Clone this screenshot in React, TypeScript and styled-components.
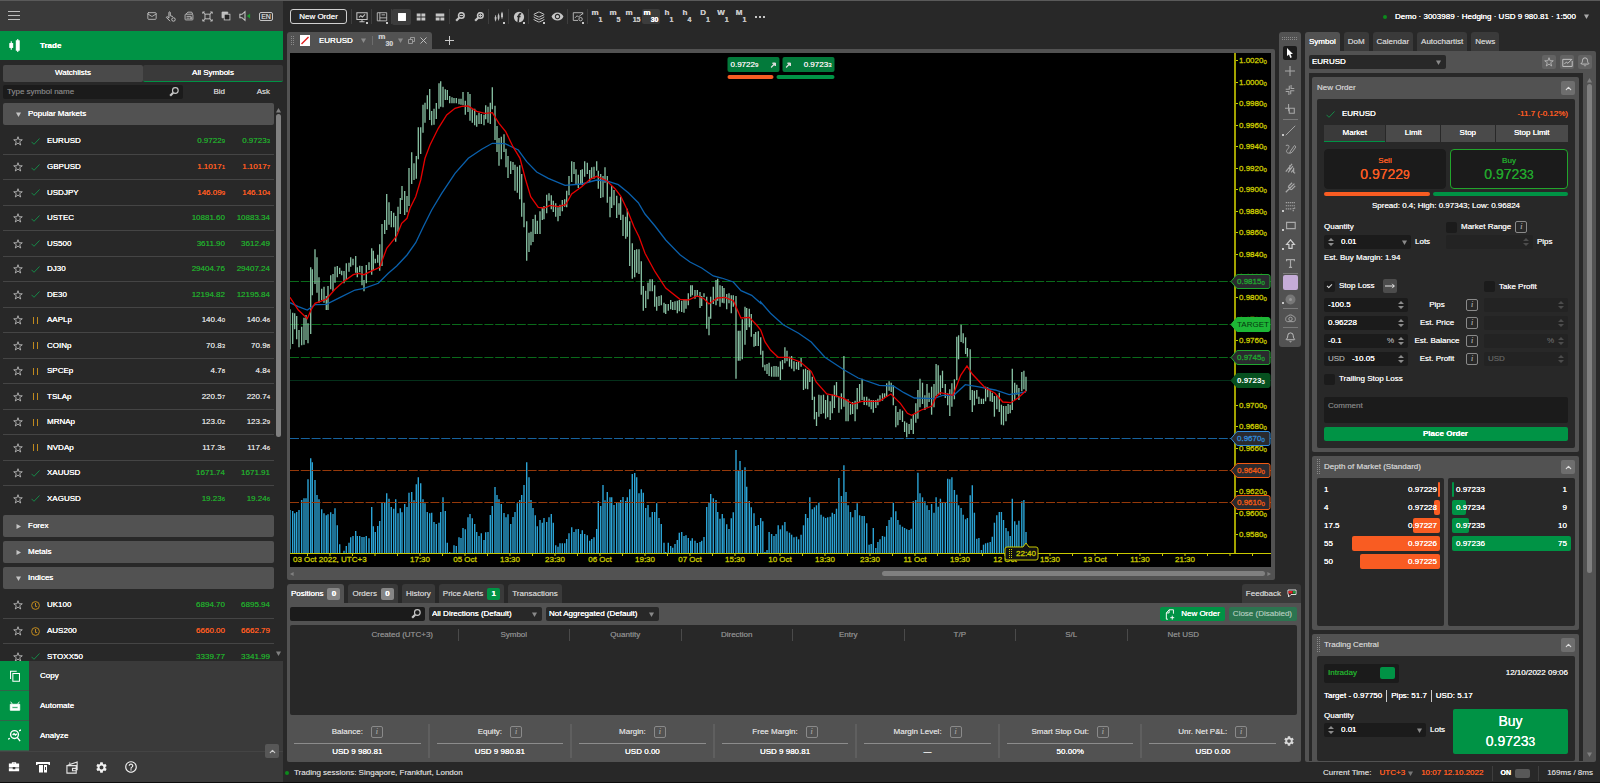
import React from "react";
import styled, { createGlobalStyle, css } from "styled-components";
import { Mail, Layers, Bell, ChevronUp } from "lucide-react";
import { MdSettings, MdHelpOutline, MdRemoveRedEye } from "react-icons/md";

const c = {
  bg: "#282828",
  panel: "#525252",
  tab: "#3a3a3a",
  field: "#1b1b1b",
  green: "#009345",
  up: "#22a52c",
  down: "#f95c22",
  text: "#ececec",
  soft: "#c6c6c6",
  dim: "#858585",
  axis: "#c9c900",
};

const Global = createGlobalStyle`
  *, *::before, *::after { box-sizing: border-box; }
  body { margin: 0; background: ${c.bg}; }
  body, button, input, select, textarea, table {
    font-family: "Liberation Sans", Arial, sans-serif;
    font-size: 8px;
    line-height: 10px;
    color: ${c.text};
    text-shadow: 0 0 0 currentColor;
  }
  button, input, select, textarea { margin: 0; padding: 0; border: 0; border-radius: 2px; background: none; outline: none; }
  button { white-space: nowrap; }
  h2, dl, dd, dt { margin: 0; font-weight: 400; }
  svg { display: block; flex: none; }
`;

/* ---------- page frame ---------- */
const Shell = styled.div`
  height: 100vh;
  display: flex;
  border-top: 1px solid #5a5a5a;
  border-bottom: 1px solid #0c0c0c;
  overflow: hidden;
  white-space: nowrap;
`;
const Side = styled.aside`
  width: 283px;
  flex: none;
  display: flex;
  flex-direction: column;
`;
const Main = styled.div`
  flex: 1;
  min-width: 0;
  display: flex;
  flex-direction: column;
`;
const TopBar = styled.header`
  height: 31px;
  flex: none;
  display: flex;
  align-items: center;
  padding: 0 11px 0 7px;
`;
const Workspace = styled.div`
  flex: 1;
  min-height: 0;
  display: flex;
  gap: 4px;
  padding: 0 4px;
`;
const Center = styled.div`
  flex: 1;
  min-width: 0;
  display: flex;
  flex-direction: column;
  gap: 4px;
`;
const ChartRow = styled.div`
  flex: 1;
  min-height: 0;
  display: flex;
  align-items: flex-start;
  gap: 4px;
`;
const StatusBar = styled.footer`
  height: 20px;
  flex: none;
  display: flex;
  align-items: center;
  padding: 2px 7px 0 2px;
  color: ${c.soft};
`;
const Spacer = styled.span`
  flex: 1;
`;
const Dot = styled.i`
  width: 4px;
  height: 4px;
  border-radius: 2px;
  background: #0c8a1c;
  margin-right: 5px;
`;

/* ---------- small parts ---------- */
const Tiny = styled.small`
  font-size: ${(p: { $s?: number }) => p.$s ?? 6}px;
`;
const Price = ({ v, s }: { v: string; s?: number }) => (
  <>
    {v.slice(0, -1)}
    <Tiny $s={s}>{v.slice(-1)}</Tiny>
  </>
);

const Caret = ({ dir = "down", fill = "#8a8a8a", size = 5 }: { dir?: string; fill?: string; size?: number }) => (
  <svg width={size} height={size} viewBox="0 0 10 10" fill={fill}>
    <path d={{ down: "M0 1h10L5 10z", up: "M0 9h10L5 0z", right: "M1 0v10l9-5z", left: "M9 0v10L0 5z" }[dir]} />
  </svg>
);
const Spin = ({ off }: { off?: boolean }) => (
  <svg width="6" height="10" viewBox="0 0 6 10" fill={off ? "#4c4c4c" : "#8c8c8c"}>
    <path d="M0 4L3 1l3 3zM0 6h6L3 9z" />
  </svg>
);
const Glass = ({ size = 10, sign = "", color = c.soft }: { size?: number; sign?: string; color?: string }) => (
  <svg width={size} height={size} viewBox="0 0 12 12" fill="none" stroke={color} strokeWidth={sign ? 1.8 : 1.4}>
    <circle cx="7.6" cy="4.2" r="3.4" />
    <path d="M5 7L1.4 10.6" strokeWidth="2.6" />
    {sign && <path d={sign === "-" ? "M5.6 4.2h4" : "M5.6 4.2h4M7.6 2.2v4"} strokeWidth="1.3" />}
  </svg>
);
const Grip = ({ cols, rows }: { cols: number; rows: number }) => (
  <svg width={cols * 2} height={rows * 2} fill="#8a8a8a">
    {Array.from({ length: cols * rows }, (_, i) => (
      <rect key={i} x={(i % cols) * 2} y={Math.floor(i / cols) * 2} width="1" height="1" />
    ))}
  </svg>
);
const Tick = () => (
  <svg width="9" height="9" viewBox="0 0 9 9" fill="none" stroke="#168a48">
    <path d="M.5 4.8L3 7.3 8.5 1.5" />
  </svg>
);

const Icon = ({ size = 12, children, fill = "none", color = c.soft, w = 1.2 }: {
  size?: number; children: React.ReactNode; fill?: string; color?: string; w?: number;
}) => (
  <svg width={size} height={size} viewBox="0 0 14 14" fill={fill} stroke={color} strokeWidth={w}>
    {children}
  </svg>
);

const InfoBox = styled.button`
  width: 12px;
  height: 12px;
  border: 1px solid #8a8a8a;
  color: #9a9a9a;
  font-family: "Liberation Serif", serif;
  font-style: italic;
`;
const Info = ({ about }: { about: string }) => <InfoBox aria-label={`About ${about}`}>i</InfoBox>;

const Field = styled.span<{ $w?: number; $off?: boolean }>`
  display: flex;
  align-items: center;
  gap: 4px;
  height: 14px;
  width: ${(p) => (p.$w ? p.$w + "px" : "auto")};
  padding: 0 4px;
  border-radius: 2px;
  background: ${(p) => (p.$off ? "#232323" : c.field)};
  color: ${(p) => (p.$off ? "#5c5c5c" : "#9a9a9a")};
  > svg:first-child, > span:first-child { margin-right: 3px; }
  input {
    flex: 1;
    min-width: 0;
    width: 0;
    color: #fff;
  }
  input::placeholder { color: #777; }
`;
const SelectWrap = styled.span<{ $w: number }>`
  display: flex;
  align-items: center;
  width: ${(p) => p.$w}px;
  height: 14px;
  padding: 0 5px 0 3px;
  border-radius: 2px;
  background: ${c.bg};
  select {
    appearance: none;
    flex: 1;
    color: #fff;
  }
`;
const Select = ({ label, w, value }: { label: string; w: number; value: string }) => (
  <SelectWrap $w={w}>
    <select aria-label={label}>
      <option>{value}</option>
    </select>
    <Caret />
  </SelectWrap>
);
const Check = styled.input.attrs({ type: "checkbox" })`
  appearance: none;
  width: 11px;
  height: 11px;
  flex: none;
  background: ${c.field};
  display: grid;
  place-items: center;
  &:checked::after {
    content: "";
    width: 5px;
    height: 3px;
    border: solid #ddd;
    border-width: 0 0 1px 1px;
    transform: translateY(-1px) rotate(-45deg);
  }
`;
const CheckLabel = styled.label`
  display: flex;
  align-items: center;
  gap: 4px;
`;

/* ---------- left panel ---------- */
const SideHead = styled.div`
  height: 30px;
  flex: none;
  display: flex;
  align-items: center;
  gap: 8px;
  padding: 0 10px 0 8px;
  background: ${c.tab};
  color: ${c.soft};
`;
const HeadTools = styled.div`
  display: flex;
  align-items: center;
  gap: 8px;
  margin-left: auto;
`;
const LangBadge = styled.button`
  width: 14px;
  height: 9px;
  border: 1px solid ${c.soft};
  color: ${c.soft};
  font-size: 7px;
  line-height: 7px;
`;
const BareButton = styled.button`
  display: grid;
  place-items: center;
`;
const TradeBar = styled.button`
  height: 29px;
  flex: none;
  display: flex;
  align-items: center;
  gap: 19px;
  padding-left: 8px;
  border-radius: 0;
  background: ${c.green};
  color: #fff;
  font-weight: 700;
`;
const SideTabs = styled.div`
  display: grid;
  grid-template-columns: 1fr 1fr;
  margin: 5px 0 3px 3px;
  flex: none;
`;
const SideTab = styled.button<{ $on?: boolean }>`
  height: 17px;
  border-radius: 2px;
  background: ${(p) => (p.$on ? c.tab : "#4a4a4a")};
  border-bottom: 1px solid ${(p) => (p.$on ? c.green : "#4a4a4a")};
  color: #fff;
`;
const SideSearch = styled.div`
  display: flex;
  align-items: center;
  flex: none;
  height: 14px;
  margin: 0 13px 4px 3px;
  color: ${c.soft};
  b { font-weight: 400; width: 42px; text-align: right; }
  b + b { width: 45px; }
`;
const ScrollRow = styled.div`
  flex: 1;
  min-height: 0;
  display: flex;
  overflow: hidden;
`;
const SymbolList = styled.div`
  flex: 1;
  margin-left: 3px;
  min-width: 0;
`;
const Group = styled.section`
  margin-bottom: 4px;
`;
const GroupHead = styled.button`
  display: flex;
  align-items: center;
  gap: 7px;
  width: 100%;
  height: 22px;
  padding-left: 13px;
  background: ${c.panel};
  color: #fff;
`;
const Quotes = styled.table`
  width: 100%;
  margin-top: 3px;
  border-collapse: collapse;
  table-layout: fixed;
  td { padding: 1px 0 0; }
  tr { height: 26px; border-bottom: 1px solid #454545; }
  tr:nth-child(even) { height: 25px; }
  tr:last-child { border-bottom: 0; }
  td:nth-child(1) { width: 28px; padding-left: 10px; }
  td:nth-child(2) { width: 16px; }
  td:nth-child(3) { color: #fff; }
  td:nth-child(4) { width: 55px; text-align: right; }
  td:nth-child(5) { width: 49px; text-align: right; padding-right: 4px; }
`;
const QuoteCell = styled.td<{ $tone: string }>`
  color: ${(p) => ({ up: c.up, down: c.down, flat: "#d8d8d8" }[p.$tone])};
`;
const Track = styled.div<{ $w: number }>`
  width: ${(p) => p.$w}px;
  flex: none;
  display: flex;
  flex-direction: column;
  align-items: center;
  justify-content: space-between;
  padding: 5px 0;
`;
const Thumb = styled.i<{ $pct: number }>`
  width: 5px;
  height: ${(p) => p.$pct}%;
  margin-top: 1px;
  margin-bottom: auto;
  border-radius: 3px;
  background: #808080;
`;
const AppNav = styled.nav`
  flex: none;
  background: ${c.tab};
`;
const AppItem = styled.button`
  display: flex;
  align-items: center;
  gap: 11px;
  width: 100%;
  height: 30px;
  color: #fff;
  span {
    width: 29px;
    height: 30px;
    display: grid;
    place-items: center;
    background: ${c.green};
    border-bottom: 1px solid #33634a;
  }
`;
const SideFoot = styled.div`
  position: relative;
  height: 31px;
  display: flex;
  align-items: center;
  gap: 16px;
  padding-left: 8px;
  border-top: 1px solid #444;
`;
const Collapse = styled.button`
  width: 14px;
  height: 14px;
  display: grid;
  place-items: center;
  background: #6e6e6e;
`;
const FootCollapse = styled(Collapse)`
  position: absolute;
  right: 4px;
  top: -8px;
  background: #575757;
`;

type Row = [string, string, string, string, string];
const popular: Row[] = [
  ["EURUSD", "0.97229", "0.97233", "up", "open"],
  ["GBPUSD", "1.10171", "1.10177", "down", "open"],
  ["USDJPY", "146.099", "146.104", "down", "open"],
  ["USTEC", "10881.60", "10883.34", "up", "open"],
  ["US500", "3611.90", "3612.49", "up", "open"],
  ["DJ30", "29404.76", "29407.24", "up", "open"],
  ["DE30", "12194.82", "12195.84", "up", "open"],
  ["AAPLp", "140.40", "140.46", "flat", "paused"],
  ["COINp", "70.83", "70.98", "flat", "paused"],
  ["SPCEp", "4.78", "4.84", "flat", "paused"],
  ["TSLAp", "220.57", "220.74", "flat", "paused"],
  ["MRNAp", "123.02", "123.29", "flat", "paused"],
  ["NVDAp", "117.35", "117.46", "flat", "paused"],
  ["XAUUSD", "1671.74", "1671.91", "up", "open"],
  ["XAGUSD", "19.236", "19.246", "up", "open"],
];
const indices: Row[] = [
  ["UK100", "6894.70", "6895.94", "up", "clock"],
  ["AUS200", "6660.00", "6662.79", "down", "clock"],
  ["STOXX50", "3339.77", "3341.99", "up", "open"],
];
const plainQuote = new Set(["USTEC", "US500", "DJ30", "DE30", "XAUUSD", "UK100", "AUS200", "STOXX50"]);

const State = ({ kind }: { kind: string }) =>
  kind === "open" ? (
    <Tick />
  ) : kind === "paused" ? (
    <svg width="9" height="9" fill="#c08a1e">
      <rect x="2" y="1" width="1" height="7" />
      <rect x="6" y="1" width="1" height="7" />
    </svg>
  ) : (
    <svg width="9" height="9" viewBox="0 0 9 9" fill="none" stroke="#c08a1e">
      <circle cx="4.5" cy="4.5" r="3.9" />
      <path d="M4.5 2v3.4h1.6" />
    </svg>
  );

const FavStar = () => (
  <svg width="10" height="10" viewBox="0 0 14 14" fill="none" stroke="#b4b4b4" strokeWidth="1.3">
    <path d="M7 1l1.5 4.3H13L9.4 8l1.4 4.6L7 9.9l-3.800 2.700L4.600 8 1 5.300h4.500z" />
  </svg>
);

const QuoteTable = ({ rows }: { rows: Row[] }) => (
  <Quotes>
    <tbody>
      {rows.map(([name, bid, ask, tone, state]) => (
        <tr key={name}>
          <td>
            <BareButton aria-label={`Favourite ${name}`}>
              <FavStar />
            </BareButton>
          </td>
          <td><State kind={state} /></td>
          <td>{name}</td>
          <QuoteCell $tone={tone}>{plainQuote.has(name) ? bid : <Price v={bid} />}</QuoteCell>
          <QuoteCell $tone={tone}>{plainQuote.has(name) ? ask : <Price v={ask} />}</QuoteCell>
        </tr>
      ))}
    </tbody>
  </Quotes>
);

const LeftPanel = () => (
  <Side>
    <SideHead>
      <BareButton aria-label="Menu">
        <svg width="12" height="10" fill="#bdbdbd">
          <rect width="12" height="1" /><rect y="4" width="12" height="1" /><rect y="8" width="12" height="1" />
        </svg>
      </BareButton>
      <HeadTools>
        <Mail size={10} strokeWidth={2} />
        <Icon size={11}>
          <path d="M6.5 13L2 8.5c-.6-1 .6-1.6 1.4-.9L5 9V2c0-1.3 1.7-1.3 1.7 0v4l3.3 1" />
          <circle cx="10.8" cy="10.8" r="2.2" />
        </Icon>
        <Icon size={10}>
          <rect x="1.5" y="4.5" width="11" height="8" rx="1" />
          <path d="M3.5 7.5h7M3.5 10h4.5M3 4.2L5.4 1.6h5.4L12 4.2M9.2 9.2h1.6v1.6H9.2z" />
        </Icon>
        <Icon size={11}>
          <rect x="3.8" y="4" width="6.4" height="6" />
          <path d="M1 3.5V1.3h2.6M10.4 1.3H13v2.2M13 10.5v2.2h-2.6M3.6 12.7H1v-2.2M1 1.3l2.8 2.7M13 1.3L10.2 4M1 12.7L3.8 10M13 12.7L10.2 10" />
        </Icon>
        <Icon size={10}>
          <path d="M9.5 1.5h-8v8h2V3.5h6z" fill={c.soft} />
          <rect x="4.5" y="4.5" width="8" height="8" fill="#222" />
        </Icon>
        <Icon size={12}>
          <path d="M1 5v4h2.5L7 12V2L3.5 5z" />
          <path d="M13 4v6L9 7z" fill="#1c9a2e" stroke="none" />
        </Icon>
        <LangBadge aria-label="Language">EN</LangBadge>
      </HeadTools>
    </SideHead>
    <TradeBar>
      <Icon size={13} fill="#fff" color="#fff">
        <path d="M3.5 2.5v9M10.5 0v14" />
        <rect x="2" y="5" width="3" height="4" /><rect x="9" y="2" width="3" height="10" />
      </Icon>
      Trade
    </TradeBar>
    <SideTabs>
      <SideTab>Watchlists</SideTab>
      <SideTab $on>All Symbols</SideTab>
    </SideTabs>
    <SideSearch>
      <Field $w={180}>
        <input aria-label="Symbol name" placeholder="Type symbol name" />
        <Glass />
      </Field>
      <b>Bid</b>
      <b>Ask</b>
    </SideSearch>
    <ScrollRow>
      <SymbolList>
        <Group>
          <GroupHead><Caret fill="#c4c4c4" />Popular Markets</GroupHead>
          <QuoteTable rows={popular} />
        </Group>
        <Group><GroupHead><Caret dir="right" fill="#c4c4c4" />Forex</GroupHead></Group>
        <Group><GroupHead><Caret dir="right" fill="#c4c4c4" />Metals</GroupHead></Group>
        <Group>
          <GroupHead><Caret fill="#c4c4c4" />Indices</GroupHead>
          <QuoteTable rows={indices} />
        </Group>
      </SymbolList>
      <Track $w={9}>
        <Caret dir="up" fill="#808080" />
        <Thumb $pct={59} />
        <Caret fill="#808080" />
      </Track>
    </ScrollRow>
    <AppNav>
      <AppItem>
        <span>
          <Icon color="#fff" size={12}><path d="M9 1.5H1.8v9M4.5 4h7.7v9H4.5z" /></Icon>
        </span>
        Copy
      </AppItem>
      <AppItem>
        <span>
          <Icon color="#fff" fill="#fff" size={12} w={1}>
            <path d="M2 2l2 3M12 2l-2 3" />
            <path d="M1.5 5h11v7h-11zM3.5 8v2h7V8z" fillRule="evenodd" />
          </Icon>
        </span>
        Automate
      </AppItem>
      <AppItem>
        <span>
          <Icon color="#fff" size={13} w={1.5}>
            <circle cx="7" cy="6" r="4.2" /><path d="M10 9l3 4M0 11l2-1M5 6.5L6.5 5 8 6.5l1.5-1.5M12 2l2-1" />
          </Icon>
        </span>
        Analyze
      </AppItem>
      <SideFoot>
        <BareButton aria-label="Accounts">
          <Icon fill="#fff" color="#fff" w={0}>
            <path d="M4.5 3V1.5h5V3H13v4.5H8.5V7h-3v.5H1V3zM6 3h2v-.5H6zM1 8.5h4.5v1h3v-1H13V12H1z" />
          </Icon>
        </BareButton>
        <BareButton aria-label="Deposit">
          <Icon size={14} fill="#fff" color="#fff" w={0}>
            <path d="M0 2h14v3h-1.5V4h-11v1H0zM3 5h4v7.5H3zM8 5h3v7.5H8zM9 7v3h1V7z" fillRule="evenodd" />
          </Icon>
        </BareButton>
        <BareButton aria-label="Wallet">
          <Icon size={13} color="#e6e6e6">
            <path d="M1 5h10v8H1zM7 8h4v2.5H7zM2 4.5l10-3.5v9M4 3V1.5" />
          </Icon>
        </BareButton>
        <BareButton aria-label="Settings"><MdSettings size={13} color="#f2f2f2" /></BareButton>
        <BareButton aria-label="Help"><MdHelpOutline size={14} color="#f2f2f2" /></BareButton>
        <FootCollapse aria-label="Collapse"><ChevronUp size={9} color="#ccc" strokeWidth={3} /></FootCollapse>
      </SideFoot>
    </AppNav>
  </Side>
);

/* ---------- top toolbar ---------- */
const OrderButton = styled.button`
  width: 57px;
  height: 15px;
  margin-right: 4px;
  border: 1px solid #d0d0d0;
  border-radius: 3px;
`;
const Tool = styled.button<{ $on?: boolean; $more?: boolean }>`
  position: relative;
  width: 19px;
  height: 16px;
  display: grid;
  place-items: center;
  background: ${(p) => (p.$on ? "#3c3c3c" : "none")};
  ${(p) =>
    p.$more &&
    css`
      &::after {
        content: "";
        position: absolute;
        right: 3px;
        bottom: 1px;
        width: 2px;
        height: 2px;
        background: #c8c8c8;
      }
    `}
`;
const ToolSep = styled.i`
  width: 1px;
  height: 15px;
  background: #3e3e3e;
`;
const Frame = styled.button<{ $on?: boolean }>`
  width: 18px;
  height: 15px;
  display: flex;
  justify-content: center;
  align-items: flex-start;
  background: ${(p) => (p.$on ? "#3c3c3c" : "none")};
  color: ${(p) => (p.$on ? "#fff" : c.soft)};
  font-weight: 700;
  line-height: 8px;
  sub {
    font-size: 7px;
    line-height: 8px;
    vertical-align: baseline;
    margin-top: 7px;
  }
`;
const TabFrame = styled(Frame)`
  width: 14px;
`;
const Account = styled.button`
  display: flex;
  align-items: center;
  gap: 8px;
  color: #fff;
  ${Dot} { margin: 0; }
`;
const frames = ["m1", "m5", "m15", "m30", "h1", "h4", "D1", "W1", "M1"];

const Toolbar = () => (
  <TopBar>
    <OrderButton>New Order</OrderButton>
    <ToolSep />
    <Tool $more aria-label="Chart display">
      <Icon><path d="M1 2h12v8H1zM7 10v2.5M4 12.5h6M3.5 7.5l2-2 2 1.5 3-3" /></Icon>
    </Tool>
    <ToolSep />
    <Tool $more aria-label="Panels"><Icon w={1}><path d="M1.5 2h11v9.5h-11zM4.5 2v9.5M4.5 8h8M6.5 4.5h4" /></Icon></Tool>
    <ToolSep />
    <Tool $on aria-label="Single chart"><Icon fill="#fff" color="#fff"><rect x="3" y="3" width="8" height="8" /></Icon></Tool>
    <Tool aria-label="Multi chart">
      <Icon fill={c.soft} w={0}><path d="M2 3h4.5v3.5H2zM7.5 3H12v3.5H7.5zM2 7.5h4.5V11H2zM7.5 7.5H12V11H7.5z" /></Icon>
    </Tool>
    <Tool aria-label="Free chart layout">
      <Icon fill={c.soft} w={0}><path d="M2 3h10v3.5H2zM2 7.5h4.5V11H2zM7.5 7.5H12V11H7.5z" /></Icon>
    </Tool>
    <ToolSep />
    <Tool aria-label="Zoom out"><Glass sign="-" /></Tool>
    <Tool aria-label="Zoom in"><Glass sign="+" /></Tool>
    <ToolSep />
    <Tool $more aria-label="Chart type">
      <Icon fill={c.soft} w={1}><path d="M3 5v7M6.5 3v8M10.5 1v8M2.5 7h1v3h-1zM6 5h1v4H6zM10 3h1v4h-1z" /></Icon>
    </Tool>
    <ToolSep />
    <Tool $more aria-label="Indicators">
      <Icon fill={c.soft} w={0}><circle cx="7" cy="7" r="6" /><path d="M9.5 3.5c-2-.5-2.5.5-2.7 2L6 13M4.8 6.5h4" fill="none" stroke={c.bg} strokeWidth="1.8" /></Icon>
    </Tool>
    <ToolSep />
    <Tool $more aria-label="Layers"><Layers size={12} color={c.soft} /></Tool>
    <Tool aria-label="Visibility"><MdRemoveRedEye size={13} color={c.soft} /></Tool>
    <ToolSep />
    <Tool $more aria-label="Drawings"><Icon w={1}><path d="M7 11H1.5V2h11v2M3.5 8l2.5-2.5 1.5 1.5L13 2.5" /><circle cx="10" cy="9.5" r="2" /></Icon></Tool>
    <ToolSep />
    {frames.map((f) => (
      <Frame key={f} $on={f === "m30"}>
        {f[0]}
        <sub>{f.slice(1)}</sub>
      </Frame>
    ))}
    <Tool aria-label="More time frames">
      <svg width="10" height="2" fill={c.soft}><rect width="2" height="2" /><rect x="4" width="2" height="2" /><rect x="8" width="2" height="2" /></svg>
    </Tool>
    <Spacer />
    <Account>
      <Dot />
      Demo · 3003989 · Hedging · USD 9 980.81 · 1:500
      <Caret fill="#aaa" />
    </Account>
  </TopBar>
);

/* ---------- chart ---------- */
/* Each bar: x, high, low, top of its volume column. */
const barsEarly =
  "15 778 898 240,23 788 882 243,29 790 838 250,35 798 868 246,42 840 892 240,50 830 886 210,57 803 884 205,63 795 870 205,69 820 880 148,77 652 852 85,82 658 736 97,90 598 702 150,96 622 728 195,102 682 758 208,110 716 750 238,117 710 758 250,124 738 780 256,129 708 780 253,137 676 718 247,144 672 724 252,150 650 698 235,157 648 682 286,164 653 672 343,170 662 676 369,177 663 700 362,184 640 690 348,192 638 665 338,197 622 650 322,204 626 646 318,212 618 668 303,217 652 682 318,224 647 667 318,231 648 706 321,237 690 724 321,244 645 700 318,252 637 660 325,260 595 674 231,265 602 660 289,271 626 640 306,278 614 638 288,284 583 662 273,291 522 648 217,299 510 552 217,305 432 540 190,312 457 524 206,319 483 532 231,326 488 532 236,332 498 575 208,339 470 545 250,346 444 492 235,351 408 450 247,359 423 495 222,366 438 487 231,372 354 468 188,380 307 402 186,387 340 390 211,394 318 386 163,400 232 328 142,407 232 312 160,414 164 248 208,420 158 218 220,427 136 178 246,434 117 210 250,440 183 226 248,447 176 224 276,454 159 207 282,462 100 176 278,467 94 170 246,474 110 172 202,481 118 150 243,487 120 150 338,494 138 160 366,501 142 160 368,507 144 160 346,514 144 160 348,522 146 163 322,528 146 164 324,534 126 166 294,541 152 194 298,549 126 186 262,555 132 212 252,562 178 218 265,569 176 226 282,575 196 230 306,582 188 222 318,589 192 222 310,597 194 226 330,602 166 208 307,609 170 218 306,616 158 222 255,622 112 178 228,630 167 270 171,636 228 306 195,642 264 347 208,649 260 328 222,657 253 306 249,663 296 352 262,669 318 384 253,677 334 372 282,684 336 360 261,690 344 422 246,697 350 428 220,704 346 448 210,710 372 500 195,717 458 532 165,725 514 632 97,732 548 606 142,738 545 586 210,744 507 576 234,751 494 552 256,757 512 552 289,765 484 552 270,772 474 510 278,777 468 508 264,785 434 490 276,792 430 452 262,799 436 478 252,805 452 486 278,812 460 500 346,819 472 514 350,825 464 498 340,832 450 484 340,839 448 470 340,845 422 472 327,852 378 436 310,860 334 396 292,867 336 372 306,873 358 402 298,880 374 414 297,887 360 404 312,892 358 406 301,899 334 380 312,907 338 372 316,914 360 396 332,920 352 386 327,927 350 386 322,935 334 362 297,940 362 416 213,947 372 444 228,954 378 442 165,960 352 398 211,967 378 458 186,975 440 502 202,980 408 474 202,987 420 466 225,995 437 504 218,1002 460 494 218,1007 440 510 210,1014 494 558 201,1022 500 566 213,1027 476 560 202,1034 514 648 178,1042 580 686 132,1049 600 682 129,1055 598 668 142,1062 598 672 190,1069 634 734 178,1075 708 782 188,1082 722 774 234,1089 698 748 225,1095 688 724 262,1102 688 724 246,1109 706 770 246,1115 740 782 220,1122 738 768 264,1129 736 766 282,1137 758 788 338,1142 762 792 366,1150 762 782 338,1157 750 778 348,1163 756 780 353,1170 754 780 342,1177 752 790 330,1183 750 784 308,1190 752 786 306,1197 750 788 318,1203 748 776 316,1210 730 766 324,1217 706 740 332,1222 706 736 325,1230 720 746 332,1237 720 740 339,1245 726 774 336,1250 738 768 332,1257 730 742 321,1265 740 836 231,1272 800 856 218,1277 740 806 192,1285 710 762 205,1293 690 766 210,1298 686 752 246,1305 706 770 266,1312 708 758 252,1317 714 760 265,1325 732 778 283,1332 730 760 297,1339 736 790 265,1345 736 770 247,1353 738 986 60,1360 842 932 121,1365 842 932 93,1372 808 928 120,1380 770 884 112,1385 774 840 170,1393 776 832 213,1399 792 860 232,1407 852 890 250,1412 846 888 288,1420 844 888 285,1427 862 914 264";
const barsLate =
  "8 452 502 964,14 494 512 1056,20 492 522 1050,26 488 528 996,33 500 530 1002,40 498 530 1008,46 498 530 1002,52 500 530 976,58 484 540 988,64 480 508 976,71 442 490 966,77 452 484 994,84 470 500 998,90 468 506 1004,97 484 514 1012,104 486 508 1010,110 484 510 1018,117 474 500 1004,124 508 570 976,130 506 566 942,136 510 568 954,142 510 546 892,149 530 600 928,155 590 658 922,161 636 678 916,168 584 650 908,174 586 642 944,181 584 640 950,187 600 656 954,193 586 652 952,200 604 660 950,206 584 640 938,212 556 624 942,218 546 592 926,225 590 638 834,232 580 628 888,239 468 620 796,245 600 664 876,251 598 664 916,258 612 644 936,264 606 642 952,271 602 664 930,277 564 628 910,284 552 606 946,291 536 600 948,297 590 615 948,304 590 616 970,311 596 620 1034,317 600 628 1032,323 600 638 984,330 600 624 1044,336 596 616 1026,342 586 604 1018,349 580 602 1008,355 580 594 1010,361 550 590 978,368 544 572 960,374 548 576 952,380 556 616 908,387 618 682 934,393 636 676 960,399 628 660 974,406 632 666 980,412 664 696 984,418 668 712 988,425 672 702 990,431 656 690 986,437 642 702 904,444 610 668 900,450 570 656 818,456 536 622 880,463 548 612 892,470 586 630 904,476 552 622 916,482 578 606 930,489 560 644 912,496 552 622 938,502 492 588 892,508 496 582 920,514 526 584 896,520 512 564 906,528 552 594 906,535 580 616 836,541 568 648 838,547 550 620 832,554 538 598 870,561 410 540 884,566 406 478 916,573 374 426 924,579 400 430 944,586 412 462 958,591 444 470 954,599 448 600 886,605 570 636 856,611 572 616 938,618 570 596 1016,624 590 612 1014,631 596 612 1050,637 596 612 1034,643 560 604 1030,649 562 592 1028,656 568 604 1026,662 578 606 1010,668 588 650 968,675 586 628 946,682 578 636 936,688 614 674 936,694 618 676 960,701 618 664 984,707 612 642 994,713 614 640 1008,719 506 630 896,726 548 600 964,732 554 584 974,738 564 600 962,746 516 574 904,752 512 568 900,758 530 574 996";

const parse = (s: string) => s.split(",").map((t) => t.split(" ").map(Number));
const earlyX = (x: number) => x / 3 - 5;
const lateX = (x: number) => x / 2.85 + 470;
const bars = [
  ...parse(barsEarly).map(([x, h, l, v]) => [earlyX(x), h / 3 - 3, l / 3 - 3, v / 3 + 377]),
  ...parse(barsLate).map(([x, h, l, v]) => [lateX(x), h / 3 + 147, l / 3 + 147, v / 3 + 147]),
];
const curve = (early: string, late: string) =>
  [
    ...parse(early).map(([x, y]) => [earlyX(x), y / 3 - 3]),
    ...parse(late).map(([x, y]) => [lateX(x), y / 3 + 147]),
  ]
    .map((p) => p.map((n) => n.toFixed(1)).join(","))
    .join(" ");
const fastAverage = curve(
  "15 742,40 780,67 806,78 780,90 760,124 748,150 718,175 695,205 674,220 670,237 674,262 662,284 652,305 595,335 558,350 520,366 505,375 475,392 440,407 390,420 325,435 285,460 235,485 195,510 175,530 169,549 168,575 184,600 190,622 188,642 220,662 245,684 290,705 325,722 390,737 440,760 472,777 474,795 466,820 470,842 464,860 432,890 410,915 388,935 379,965 392,990 416,1007 438,1027 480,1047 530,1062 560,1080 610,1110 665,1142 714,1185 748,1210 750,1237 738,1257 746,1272 762,1297 744,1320 742,1345 752,1368 804,1393 802,1415 825",
  "2 390,14 425,30 450,52 472,80 472,115 486,146 514,160 546,190 582,212 586,240 596,265 612,290 604,340 604,360 590,373 582,400 610,420 640,432 646,460 630,490 618,502 590,514 578,550 586,572 526,590 498,605 522,640 562,670 580,692 606,715 608,735 594,758 572"
);
const slowAverage = curve(
  "15 758,40 770,67 780,90 764,124 763,170 740,210 720,237 715,280 700,310 670,335 648,366 615,392 578,415 530,440 480,470 430,510 370,550 325,590 298,622 280,660 281,700 300,725 335,755 366,790 385,840 406,890 402,935 390,965 393,1000 404,1030 428,1060 458,1080 492,1110 528,1142 570,1185 614,1215 636,1250 654,1285 678,1310 684,1345 696,1368 722,1400 736,1427 760",
  "2 306,30 340,66 374,110 400,146 426,185 472,240 510,280 534,340 556,380 558,410 578,440 594,495 596,520 586,552 586,585 554,620 560,670 570,710 584,758 576"
);

const times = ["17:30", "05 Oct", "13:30", "23:30", "06 Oct", "19:30", "07 Oct", "15:30", "10 Oct", "13:30", "23:30", "11 Oct", "19:30", "12 Oct", "15:30", "13 Oct", "11:30", "21:30"];
const levels: { y: number; text: string; line: string; edge: string; solid?: string }[] = [
  { y: 228, text: "0.98150", line: "#0a6a1a", edge: "#1fa52f" },
  { y: 271, text: "TARGET", line: "#0a6a1a", edge: "#1db636", solid: "#1db636" },
  { y: 304, text: "0.97450", line: "#0a6a1a", edge: "#1fa52f" },
  { y: 327, text: "0.97233", line: "#04301a", edge: "#06501f", solid: "#06501f" },
  { y: 385, text: "0.96700", line: "#17639f", edge: "#2f8bdc" },
  { y: 417, text: "0.96400", line: "#96390a", edge: "#f25a12" },
  { y: 449, text: "0.96100", line: "#96390a", edge: "#f25a12" },
];
/* Scale labels that a level tag covers are left out. */
const covered = new Set([14, 15, 19]);

const Plot = styled.svg`
  flex: 1;
  width: 100%;
  min-height: 0;
  background: #000;
  font-size: 8px;
  text-shadow: none;
`;
const TailDigit = styled.tspan`
  font-size: 6px;
`;
const AxisPrice = ({ v }: { v: string }) => (
  <>
    {v.slice(0, -1)}
    <TailDigit dy="1">{v.slice(-1)}</TailDigit>
  </>
);

const ChartPlot = () => (
  <Plot role="img" aria-label="EURUSD chart">
    <g stroke="#2ba3d4" strokeWidth="1.4">
      {bars.map(([x, , , v], i) => <path key={i} d={`M${x.toFixed(1)} ${v.toFixed(1)}V500`} />)}
    </g>
    {levels.map((l) => (
      <line key={l.y} x1="0" x2="100%" y1={l.y + 0.5} y2={l.y + 0.5} stroke={l.line} strokeDasharray={l.text === "0.97233" ? "none" : "9 1.8"} />
    ))}
    <g stroke="#8ac4a6" strokeWidth="1.3">
      {bars.map(([x, h, lo], i) => <path key={i} d={`M${x.toFixed(1)} ${h.toFixed(1)}V${lo.toFixed(1)}`} />)}
    </g>
    <polyline points={slowAverage} fill="none" stroke="#0a60ac" strokeWidth="1.3" />
    <polyline points={fastAverage} fill="none" stroke="#e60000" strokeWidth="1.3" />
    <line x1="0" x2="100%" y1="500.5" y2="500.5" stroke={c.axis} />
    <g fill={c.axis} textAnchor="middle">
      {Array.from({ length: 43 }, (_, i) => (
        <rect key={i} x={17 + i * 22.5} y="501" width="1" height="2" />
      ))}
      <g stroke={c.axis} strokeWidth="0.3">
        <text x="3" y="509" textAnchor="start">03 Oct 2022, UTC+3</text>
        {times.map((t, i) => <text key={i} x={130 + i * 45} y="509">{t}</text>)}
      </g>
    </g>
    <path d="M717 494h16l3-4 3 4h7q2 0 2 2v9q0 2-2 2h-29q-2 0-2-2v-9q0-2 2-2z" fill="#111" stroke={c.axis} />
    <g fill={c.axis}>
      {[0, 1, 2, 3, 4].flatMap((r) => [0, 2].map((k) => <rect key={`${r}${k}`} x={719 + k} y={496 + r * 2} width="1" height="1" />))}
      <text x="726" y="503" stroke={c.axis} strokeWidth="0.3">22:40</text>
    </g>
    <svg x="100%" overflow="visible">
      <rect x="-37" y="0" width="2" height="500" fill="#a3a300" />
      <g fill={c.axis}>
        {Array.from({ length: 23 }, (_, i) => {
          const y = Math.round(7 + i * 21.55);
          return covered.has(i) ? null : (
            <g key={i}>
              <rect x="-35" y={y} width="2" height="1" />
              <text x="-32" y={y + 3} stroke={c.axis} strokeWidth="0.3"><AxisPrice v={((10020 - i * 20) / 10000).toFixed(4) + "0"} /></text>
            </g>
          );
        })}
      </g>
      {levels.map((l) => {
        const ink = l.text === "TARGET" ? "#06380f" : l.solid ? "#fff" : l.edge;
        return (
          <g key={l.y}>
            <path d={`M-40 ${l.y + 0.5}l5-6q1-1 2-1h30q2 0 2 2v10q0 2-2 2h-30q-1 0-2-1z`} fill={l.solid ?? "#2a2a2e"} stroke={l.edge} />
            <text x="-34" y={l.y + 3} fill={ink} stroke={l.solid ? "none" : ink} strokeWidth="0.3" fontWeight={l.text === "0.97233" ? 700 : 400}>
              {l.text === "TARGET" ? l.text : <AxisPrice v={l.text} />}
            </text>
          </g>
        );
      })}
    </svg>
  </Plot>
);

const ChartColumn = styled.div`
  flex: 1;
  min-width: 0;
  align-self: stretch;
  display: flex;
  flex-direction: column;
`;
const TabRow = styled.div`
  display: flex;
  align-items: center;
  flex: none;
`;
const ChartTab = styled.div`
  display: flex;
  align-items: center;
  height: 17px;
  gap: 5px;
  padding: 0 5px 0 4px;
  border-radius: 3px 3px 0 0;
  background: ${c.panel};
  strong { font-weight: 400; color: #fff; margin: 0 3px 0 4px; }
  ${ToolSep} { height: 9px; margin: 0 1px; background: #6c6c6c; }
`;
const AddTab = styled.button`
  margin-left: 13px;
`;
const ChartFrame = styled.div`
  position: relative;
  flex: 1;
  min-height: 0;
  display: flex;
  flex-direction: column;
  padding: 4px 4px 0 3px;
  border-radius: 0 2px 2px 2px;
  background: ${c.panel};
`;
const HScroll = styled.div`
  height: 13px;
  flex: none;
  display: flex;
  align-items: center;
  justify-content: space-between;
  i {
    width: 39%;
    height: 5px;
    margin: 0 2px 0 auto;
    border-radius: 3px;
    background: #808080;
  }
`;
const QuickTrade = styled.div`
  position: absolute;
  left: 50%;
  top: 8px;
  transform: translateX(-50%);
  display: grid;
  grid-template-columns: 52px 52px;
  gap: 3px;
`;
const QuickButton = styled.button`
  height: 15px;
  display: flex;
  align-items: center;
  justify-content: space-between;
  padding: 0 3px;
  background: #037a3b;
`;
const Sentiment = styled.div<{ $cols: string; $gap: number }>`
  grid-column: 1 / -1;
  display: grid;
  grid-template-columns: ${(p) => p.$cols};
  gap: ${(p) => p.$gap}px;
  i { height: 4px; border-radius: 2px; background: ${c.down}; }
  i + i { background: ${c.green}; }
`;
const ArrowNE = () => (
  <svg width="6" height="6" viewBox="0 0 6 6" fill="#ddd" stroke="#ddd" strokeWidth="1.2">
    <path d="M.5 5.5L4 2" /><path d="M2 1h3v3z" strokeWidth="1" />
  </svg>
);

const Chart = () => (
  <ChartColumn>
    <TabRow>
      <ChartTab>
        <Grip cols={2} rows={5} />
        <svg width="10" height="11"><rect width="10" height="11" fill="#fff" /><path d="M1.5 9L8.5 2" stroke="#e02020" strokeWidth="1.5" /></svg>
        <strong>EURUSD</strong>
        <Caret />
        <ToolSep />
        <TabFrame as="span">m<sub>30</sub></TabFrame>
        <Caret />
        <Icon size={7} color="#a0a0a0" w={1.8}><path d="M1 5h8v8H1zM5 5V1h8v8H9" /></Icon>
        <BareButton aria-label="Close tab"><Icon size={7} w={1.8}><path d="M1 1l12 12M13 1L1 13" /></Icon></BareButton>
      </ChartTab>
      <AddTab aria-label="Add chart"><Icon size={9} w={1.5} color="#d0d0d0"><path d="M7 0v14M0 7h14" /></Icon></AddTab>
    </TabRow>
    <ChartFrame>
      <ChartPlot />
      <QuickTrade>
        <QuickButton aria-label="Quick sell"><span><Price v="0.97229" /></span><ArrowNE /></QuickButton>
        <QuickButton aria-label="Quick buy"><ArrowNE /><span><Price v="0.97233" /></span></QuickButton>
        <Sentiment $cols="46fr 58fr" $gap={3}><i /><i /></Sentiment>
      </QuickTrade>
      <HScroll>
        <Caret dir="left" fill="#808080" size={4} />
        <i />
        <Caret dir="right" fill="#808080" size={4} />
      </HScroll>
    </ChartFrame>
  </ChartColumn>
);

/* ---------- drawing tools ---------- */
const Strip = styled.div`
  width: 22px;
  flex: none;
  display: flex;
  flex-direction: column;
  align-items: center;
  gap: 1px;
  padding: 5px 0 2px;
  border-radius: 3px;
  background: ${c.panel};
  hr { width: 15px; height: 1px; border: 0; margin: 0; background: #7a7a7a; }
`;
const StripTool = styled(Tool)<{ $short?: boolean }>`
  width: 18px;
  height: ${(p) => (p.$short ? 16 : 18)}px;
  background: none;
  &::after { right: auto; left: 1px; bottom: 3px; }
`;
const PickTool = styled(StripTool)`
  width: 14px;
  height: 14px;
  margin: 4px 0 1px;
  background: ${c.field};
`;
const ColorChip = styled.button`
  width: 15px;
  height: 15px;
  background: #c5acd8;
`;
const tool = "#a8a8a8";
const DrawStrip = () => (
  <Strip>
    <Grip cols={8} rows={2} />
    <PickTool aria-label="Pointer"><svg width="8" height="10" viewBox="0 0 8 10" fill="#fff"><path d="M1 0v8l2-1.6L4.3 10l1.5-.7L4.5 6H7z" /></svg></PickTool>
    <StripTool aria-label="Crosshair"><Icon size={10} color={tool} w={1.5}><path d="M7 0v14M0 7h14" /></Icon></StripTool>
    <StripTool aria-label="Magnet crosshair"><Icon size={10} color={tool} w={1.5}><path d="M6 1v5H1M8 13V8h5M8.500 0v5H13M5.500 14V9H1" /></Icon></StripTool>
    <StripTool aria-label="Measure"><Icon size={10} color={tool} w={1.5}><path d="M5 0v10M0 6h9M6 6h7v7H6z" /></Icon></StripTool>
    <hr />
    <StripTool $more aria-label="Line"><Icon size={11} color={tool}><path d="M1 13L13 1" /></Icon></StripTool>
    <StripTool aria-label="Freehand"><Icon size={11} color={tool}><path d="M1 2c5-2 5 2 2 5s1 6 3 4M6 12l1-3 5-7 2 1.5-5 7z" /></Icon></StripTool>
    <StripTool aria-label="Channels"><Icon size={11} color={tool} w={1.5}><path d="M1 11L9 1M4 12L10 4M8 12l3-4M6 3v7M11 6v6l2 1" /></Icon></StripTool>
    <StripTool aria-label="Pitchfork"><Icon size={11} color={tool} w={1.5}><path d="M1 13l5-5M6 8l6-6M4 6l5-5M8 10l5-5M4 6l4 4" /></Icon></StripTool>
    <StripTool $more aria-label="Fibonacci"><Icon size={11} color={tool} w={1.5}><path d="M1 2h12M1 6h12M1 10h8M10.500 13V9h3" strokeDasharray="1.5 1" /></Icon></StripTool>
    <StripTool $more aria-label="Rectangle"><Icon size={11} color={tool} w={1.5}><path d="M2 3h11v8H2z" /></Icon></StripTool>
    <StripTool $more aria-label="Arrow"><Icon size={11} color="#d0d0d0" w={1.5}><path d="M7 1L2 7h3v5h4V7h3z" /></Icon></StripTool>
    <StripTool aria-label="Text"><Icon size={11} color={tool} w={1.5}><path d="M2 4V2h10v2M7 2v10M5 12h4" /></Icon></StripTool>
    <hr />
    <ColorChip aria-label="Colour" />
    <StripTool $more $short aria-label="Fill style"><svg width="11" height="11"><circle cx="5.5" cy="5.5" r="5" fill="#777" /><circle cx="5.5" cy="5.5" r="1.5" fill="#999" /></svg></StripTool>
    <hr />
    <StripTool $short aria-label="Snapshot"><Icon size={11} color={tool}><path d="M4 4c0-2 6-2 6 0 4 0 4 7 1 7H3C0 11 0 4 4 4z" /><circle cx="7" cy="7.5" r="2.2" /></Icon></StripTool>
    <hr />
    <StripTool $short aria-label="Alert"><Bell size={11} color="#c8c8c8" /></StripTool>
  </Strip>
);

/* ---------- positions panel ---------- */
const Panel = styled.div`
  flex: none;
  height: 178px;
  display: flex;
  flex-direction: column;
`;
const Tab = styled.button<{ $on?: boolean }>`
  display: flex;
  align-items: center;
  gap: 4px;
  height: 19px;
  padding: 0 4px;
  margin-right: 4px;
  border-radius: 3px 3px 0 0;
  background: ${(p) => (p.$on ? c.panel : c.tab)};
  color: ${(p) => (p.$on ? "#fff" : c.soft)};
`;
const EndTab = styled(Tab)`
  margin: 0 0 0 auto;
  gap: 6px;
`;
const Badge = styled.b<{ $hot?: boolean }>`
  width: 13px;
  height: 12px;
  border-radius: 2px;
  background: ${(p) => (p.$hot ? c.green : "#868686")};
  color: #fff;
  line-height: 12px;
`;
const PanelBody = styled.div`
  flex: 1;
  display: flex;
  flex-direction: column;
  border-radius: 0 0 2px 2px;
  background: ${c.panel};
`;
const Filters = styled.div`
  display: flex;
  gap: 4px;
  padding: 4px 4px 4px 3px;
`;
const GreenButton = styled.button`
  display: flex;
  align-items: center;
  justify-content: center;
  gap: 6px;
  height: 14px;
  padding: 0 5px 0 4px;
  background: ${c.green};
  color: #fff;
  &:disabled { background: #2c7450; color: #9fbfae; }
`;
const Grid = styled.div`
  height: 90px;
  margin: 0 4px 0 3px;
  border-radius: 2px;
  background: ${c.bg};
`;
const Deals = styled.table`
  width: 100%;
  table-layout: fixed;
  border-collapse: collapse;
  th {
    height: 19px;
    padding: 0;
    font-weight: 400;
    color: ${c.dim};
  }
  th:first-child { width: 57px; }
  th:last-child { width: 58px; }
  th span { display: block; border-right: 1px solid #4a4a4a; line-height: 12px; }
  th:nth-last-child(2) span { border: 0; }
`;
const Stats = styled.dl`
  flex: 1;
  display: flex;
  align-items: center;
  padding-top: 4px;
`;
const Stat = styled.div`
  flex: 1;
  height: 34px;
  padding: 0 7px;
  border-right: 2px solid #5f5f5f;
  text-align: center;
  &:nth-last-child(2) { border: 0; }
  dt {
    display: flex;
    align-items: center;
    justify-content: center;
    gap: 8px;
    height: 20px;
    padding-bottom: 2px;
    border-bottom: 1px solid #8c8c8c;
    color: #d4d4d4;
  }
  dd { color: #fff; line-height: 16px; }
`;
const StatGear = styled.dd`
  width: 18px;
`;
const stats = [
  ["Balance:", "USD 9 980.81"], ["Equity:", "USD 9 980.81"], ["Margin:", "USD 0.00"], ["Free Margin:", "USD 9 980.81"],
  ["Margin Level:", "—"], ["Smart Stop Out:", "50.00%"], ["Unr. Net P&L:", "USD 0.00"],
];

const Positions = () => (
  <Panel>
    <TabRow>
      <Tab $on>Positions <Badge>0</Badge></Tab>
      <Tab>Orders <Badge>0</Badge></Tab>
      <Tab>History</Tab>
      <Tab>Price Alerts <Badge $hot>1</Badge></Tab>
      <Tab>Transactions</Tab>
      <EndTab>
        Feedback
        <svg width="10" height="9" viewBox="0 0 10 9">
          <path d="M1 1h8v4.5H4L1.5 8V5.5H1z" fill="#222" stroke="#ddd" />
          <rect x="1.5" y="2" width="4" height="2.5" fill="#e02020" /><rect x="6" y="2" width="2.5" height="2.5" fill="#1c9a3e" />
        </svg>
      </EndTab>
    </TabRow>
    <PanelBody>
      <Filters>
        <Field $w={135}><input aria-label="Search positions" /><Glass /></Field>
        <Select label="Direction" w={113} value="All Directions (Default)" />
        <Select label="Aggregation" w={113} value="Not Aggregated (Default)" />
        <Spacer />
        <GreenButton>
          <Icon size={11} color="#fff"><path d="M5 13H3V5l3.5-4H12v5M6.5 1v4H3M10.5 8.5v5M8 11h5" /></Icon>
          New Order
        </GreenButton>
        <GreenButton disabled>Close (Disabled)</GreenButton>
      </Filters>
      <Grid>
        <Deals>
          <thead>
            <tr>
              <th />
              {["Created (UTC+3)", "Symbol", "Quantity", "Direction", "Entry", "T/P", "S/L", "Net USD"].map((h) => (
                <th key={h}><span>{h}</span></th>
              ))}
              <th />
            </tr>
          </thead>
        </Deals>
      </Grid>
      <Stats>
        {stats.map(([k, v]) => (
          <Stat key={k}>
            <dt>{k} <Info about={k} /></dt>
            <dd>{v}</dd>
          </Stat>
        ))}
        <StatGear><BareButton aria-label="Configure summary"><MdSettings size={12} color="#d8d8d8" /></BareButton></StatGear>
      </Stats>
    </PanelBody>
  </Panel>
);

/* ---------- right panel ---------- */
const Right = styled.section`
  width: 291px;
  flex: none;
  display: flex;
  flex-direction: column;
`;
const RightBody = styled.div`
  flex: 1;
  min-height: 0;
  display: flex;
  flex-direction: column;
  padding-left: 4px;
  border-radius: 0 2px 2px 2px;
  background: ${c.panel};
`;
const SymbolBar = styled.div`
  display: flex;
  gap: 4px;
  padding: 4px 4px 4px 0;
`;
const BarButton = styled(Collapse)`
  background: #636363;
`;
const Cards = styled.div`
  flex: 1;
  display: flex;
  flex-direction: column;
  gap: 4px;
  overflow: hidden;
  margin-bottom: 1px;
  padding: 4px 4px 0 3px;
  background: ${c.bg};
`;
const Card = styled.section`
  flex: none;
  padding: 0 4px 4px 5px;
  border-radius: 2px;
  background: ${c.panel};
`;
const CardHead = styled.div`
  display: flex;
  align-items: center;
  gap: 3px;
  height: 22px;
  color: ${c.soft};
  h2 { flex: 1; font-size: 8px; }
`;
const CardBody = styled.div`
  padding: 0 7px 7px;
  border-radius: 2px;
  background: ${c.bg};
`;
const SymbolRow = styled.div`
  display: flex;
  align-items: center;
  gap: 7px;
  height: 26px;
  padding-top: 4px;
  padding-left: 2px;
  color: #fff;
  em { margin-left: auto; font-style: normal; color: ${c.down}; }
`;
const TypeTabs = styled.div`
  display: grid;
  grid-template-columns: 62fr 54fr 54fr 73fr;
  gap: 1px;
  height: 17px;
  margin-bottom: 7px;
`;
const TypeTab = styled.button<{ $on?: boolean }>`
  border-radius: 0;
  border-bottom: 1px solid ${(p) => (p.$on ? c.green : "#4a4a4a")};
  background: ${(p) => (p.$on ? c.tab : "#4a4a4a")};
  color: #fff;
`;
const Sides = styled.div`
  display: grid;
  grid-template-columns: 122fr 118fr;
  gap: 4px;
  height: 40px;
  margin-bottom: 3px;
`;
const SideButton = styled.button<{ $buy?: boolean }>`
  border-radius: 4px;
  background: ${c.field};
  border: 1px solid ${(p) => (p.$buy ? c.up : c.field)};
  color: ${(p) => (p.$buy ? c.up : c.down)};
  strong { display: block; font-weight: 400; font-size: 14px; line-height: 16px; }
`;
const Spread = styled.p`
  margin: 0 0 3px;
  line-height: 20px;
  text-align: center;
`;
const QtyGrid = styled.div`
  display: grid;
  grid-template-columns: 1fr 1fr;
  grid-template-rows: 16px 14px 18px;
  align-items: center;
  margin-bottom: 12px;
`;
const Inline = styled.div`
  display: flex;
  align-items: center;
  gap: 4px;
`;
const StopGrid = styled.div`
  display: grid;
  grid-template-columns: 84px 1fr 18px 84px;
  row-gap: 4px;
  align-items: center;
  label { text-align: center; }
`;
const StopHead = styled(Inline)`
  grid-column: 1 / 4;
  height: 14px;
  gap: 8px;
  margin-bottom: 1px;
`;
const MoveButton = styled(Collapse)`
  background: #4c4c4c;
  color: #fff;
`;
const Trailing = styled(CheckLabel)`
  height: 14px;
  margin: 6px 0 11px;
`;
const Comment = styled.textarea`
  display: block;
  width: 100%;
  height: 26px;
  padding: 4px;
  margin-bottom: 4px;
  resize: none;
  background: ${c.field};
  &::placeholder { color: #777; }
`;
const PlaceButton = styled(GreenButton)`
  width: 100%;
  font-weight: 700;
`;
const Depth = styled.div`
  display: grid;
  grid-template-columns: 1fr 1fr;
  gap: 4px;
  height: 148px;
`;
const DepthSide = styled.div`
  padding: 4px 4px 0;
  border-radius: 2px;
  background: ${c.bg};
`;
const DepthRow = styled.div<{ $bid?: boolean }>`
  position: relative;
  display: flex;
  justify-content: space-between;
  align-items: center;
  height: 15px;
  margin-bottom: 3px;
  padding: ${(p) => (p.$bid ? "0 3px" : "0 4px")};
  color: #fff;
  span { position: relative; }
  i {
    position: absolute;
    top: 0;
    bottom: 0;
    ${(p) => (p.$bid ? "right: 0;" : "left: 0;")}
    border-radius: 2px;
    background: ${(p) => (p.$bid ? c.down : c.green)};
  }
`;
const bids: [string, string, number][] = [["1", "0.97229", 2], ["4", "0.97228", 5], ["17.5", "0.97227", 23], ["55", "0.97226", 74], ["50", "0.97225", 67]];
const asks: [string, string, number][] = [["1", "0.97233", 2], ["9", "0.97234", 12], ["10", "0.97235", 14], ["75", "0.97236", 100]];

const CentralTop = styled(Inline)`
  justify-content: space-between;
  height: 34px;
`;
const Period = styled.label`
  display: flex;
  align-items: center;
  justify-content: space-between;
  width: 75px;
  height: 19px;
  padding: 0 4px;
  border-radius: 2px;
  background: ${c.field};
  color: ${c.up};
  input { appearance: none; width: 15px; height: 12px; background: ${c.green}; }
`;
const Facts = styled.div`
  display: flex;
  height: 12px;
  line-height: 12px;
  color: #fff;
  span + span { margin-left: 4px; padding-left: 4px; border-left: 1px solid #ccc; }
`;
const CentralTrade = styled.div`
  display: grid;
  grid-template-columns: 129px 1fr;
  margin-top: 7px;
  label { display: block; line-height: 14px; }
`;
const BuyNow = styled.button`
  height: 45px;
  background: ${c.green};
  color: #fff;
  font-size: 14px;
  line-height: 20px;
  span { display: block; }
`;

const Header = ({ title, grip }: { title: string; grip?: boolean }) => (
  <CardHead>
    {grip && <Grip cols={2} rows={8} />}
    <h2>{title}</h2>
    <Collapse aria-label={`Collapse ${title}`}><ChevronUp size={9} color="#ddd" strokeWidth={3} /></Collapse>
  </CardHead>
);

const StopRow = ({ name, value, pre, post }: { name: string; value: string; pre?: string; post?: string }) => (
  <>
    <Field>
      {pre && <span>{pre}</span>}
      <input id={`sl-${name}`} defaultValue={value} />
      {post}
      <Spin />
    </Field>
    <label htmlFor={`sl-${name}`}>{name}</label>
    <Info about={name} />
    <Field $off>
      {pre && <span>{pre}</span>}
      <input aria-label={`Take profit ${name}`} disabled />
      {post}
      <Spin off />
    </Field>
  </>
);

const RightPanel = () => (
  <Right>
    <TabRow>
      <Tab $on>Symbol</Tab><Tab>DoM</Tab><Tab>Calendar</Tab><Tab>Autochartist</Tab><Tab>News</Tab>
    </TabRow>
    <RightBody>
      <SymbolBar>
        <Select label="Symbol" w={137} value="EURUSD" />
        <Spacer />
        <BarButton aria-label="Favourite"><FavStar /></BarButton>
        <BarButton aria-label="Open chart"><Icon size={11}><path d="M13 5v7H1V3h11M3 9l2.5-2.5L7.5 8 13 2.5" /></Icon></BarButton>
        <BarButton aria-label="Create alert"><Bell size={10} color="#d0d0d0" /></BarButton>
      </SymbolBar>
      <ScrollRow>
        <Cards>
          <Card>
            <Header title="New Order" />
            <CardBody>
              <SymbolRow><Tick />EURUSD<em>-11.7 (-0.12%)</em></SymbolRow>
              <TypeTabs>
                <TypeTab $on>Market</TypeTab><TypeTab>Limit</TypeTab><TypeTab>Stop</TypeTab><TypeTab>Stop Limit</TypeTab>
              </TypeTabs>
              <Sides>
                <SideButton>Sell<strong><Price v="0.97229" s={12} /></strong></SideButton>
                <SideButton $buy>Buy<strong><Price v="0.97233" s={12} /></strong></SideButton>
              </Sides>
              <Sentiment $cols="106fr 135fr" $gap={3}><i /><i /></Sentiment>
              <Spread>Spread: 0.4; High: 0.97343; Low: 0.96824</Spread>
              <QtyGrid>
                <label htmlFor="qty">Quantity</label>
                <Inline>
                  <CheckLabel><Check />Market Range</CheckLabel>
                  <Info about="market range" />
                </Inline>
                <Inline>
                  <Field $w={87}><Spin /><input id="qty" defaultValue="0.01" /><Caret /></Field>
                  Lots
                </Inline>
                <Inline>
                  <Field $w={87} $off><input aria-label="Market range pips" disabled /><Spin off /></Field>
                  Pips
                </Inline>
                <span>Est. Buy Margin: 1.94</span>
              </QtyGrid>
              <StopGrid>
                <StopHead>
                  <CheckLabel><Check defaultChecked />Stop Loss</CheckLabel>
                  <MoveButton aria-label="Copy to take profit"><Icon size={10} color="#fff"><path d="M0 7h13M10 4l3 3-3 3" /></Icon></MoveButton>
                </StopHead>
                <CheckLabel><Check />Take Profit</CheckLabel>
                <StopRow name="Pips" value="-100.5" />
                <StopRow name="Est. Price" value="0.96228" />
                <StopRow name="Est. Balance" value="-0.1" post="%" />
                <StopRow name="Est. Profit" value="-10.05" pre="USD" />
              </StopGrid>
              <Trailing><Check />Trailing Stop Loss</Trailing>
              <Comment aria-label="Comment" placeholder="Comment" />
              <PlaceButton>Place Order</PlaceButton>
            </CardBody>
          </Card>
          <Card>
            <Header title="Depth of Market (Standard)" grip />
            <Depth>
              <DepthSide>
                {bids.map(([q, p, w]) => (
                  <DepthRow key={p} $bid><i style={{ width: `${w}%` }} /><span>{q}</span><span>{p}</span></DepthRow>
                ))}
              </DepthSide>
              <DepthSide>
                {asks.map(([q, p, w]) => (
                  <DepthRow key={p}><i style={{ width: `${w}%` }} /><span>{p}</span><span>{q}</span></DepthRow>
                ))}
              </DepthSide>
            </Depth>
          </Card>
          <Card>
            <Header title="Trading Central" grip />
            <CardBody>
              <CentralTop>
                <Period>Intraday<input type="checkbox" defaultChecked /></Period>
                <span>12/10/2022 09:06</span>
              </CentralTop>
              <Facts><span>Target - 0.97750</span><span>Pips: 51.7</span><span>USD: 5.17</span></Facts>
              <CentralTrade>
                <div>
                  <label htmlFor="tc-qty">Quantity</label>
                  <Inline>
                    <Field $w={102}><Spin /><input id="tc-qty" defaultValue="0.01" /><Caret /></Field>
                    Lots
                  </Inline>
                </div>
                <BuyNow>Buy<span><Price v="0.97233" s={12} /></span></BuyNow>
              </CentralTrade>
            </CardBody>
          </Card>
        </Cards>
        <Track $w={13}>
          <Caret dir="up" fill="#808080" />
          <Thumb $pct={72} />
          <Caret fill="#808080" />
        </Track>
      </ScrollRow>
    </RightBody>
  </Right>
);

/* ---------- status bar ---------- */
const Clock = styled.div`
  display: flex;
  align-items: center;
  justify-content: space-between;
  width: 270px;
  em { font-style: normal; color: ${c.down}; }
  em + svg { margin-left: -5px; }
  strong { color: #fff; font-size: 7px; }
`;
const Switch = styled.input.attrs({ type: "checkbox" })`
  appearance: none;
  width: 15px;
  height: 9px;
  background: #585858;
`;
const SwitchLabel = styled.label`
  display: flex;
  align-items: center;
  gap: 4px;
`;

export default function App() {
  return (
    <>
      <Global />
      <Shell>
        <LeftPanel />
        <Main>
          <Toolbar />
          <Workspace>
            <Center>
              <ChartRow>
                <Chart />
                <DrawStrip />
              </ChartRow>
              <Positions />
            </Center>
            <RightPanel />
          </Workspace>
          <StatusBar>
            <Dot />
            Trading sessions: Singapore, Frankfurt, London
            <Spacer />
            <Clock>
              <span>Current Time:</span>
              <em>UTC+3</em>
              <Caret fill="#777" />
              <em>10:07 12.10.2022</em>
              <ToolSep />
              <SwitchLabel><strong>ON</strong><Switch defaultChecked /></SwitchLabel>
              <ToolSep />
              <span>169ms / 8ms</span>
            </Clock>
          </StatusBar>
        </Main>
      </Shell>
    </>
  );
}
